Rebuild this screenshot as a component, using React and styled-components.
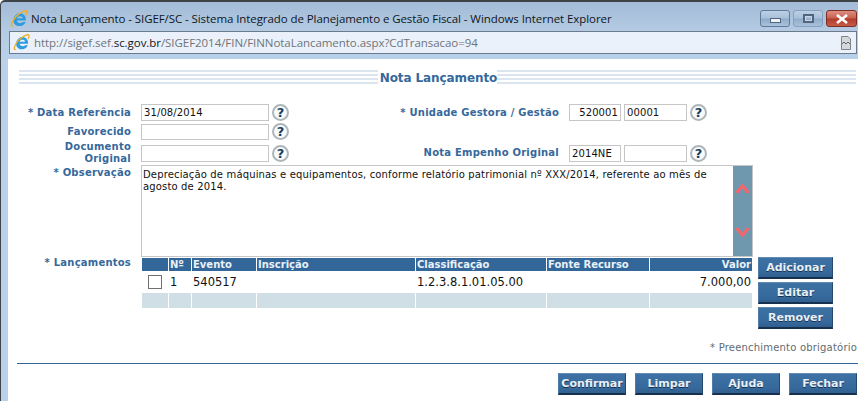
import styled, { createGlobalStyle } from 'styled-components'

const GlobalStyle = createGlobalStyle`
  html, body {
    margin: 0;
    padding: 0;
    background: #ffffff;
  }
  * {
    box-sizing: border-box;
  }
`

const columns = [
  { key: 'check', label: '', width: 27 },
  { key: 'numero', label: 'Nº', width: 23 },
  { key: 'evento', label: 'Evento', width: 65 },
  { key: 'inscricao', label: 'Inscrição', width: 159 },
  { key: 'classificacao', label: 'Classificação', width: 131 },
  { key: 'fonte', label: 'Fonte Recurso', width: 103 },
  { key: 'valor', label: 'Valor', width: 102, right: true },
]

function IeIcon({ size = 18 }) {
  return (
    <svg width={size} height={size} viewBox="0 0 18 18">
      <path d="M9.800 3.200C13.500 3.200 16.300 6.100 15.900 10.400H7C7.200 13 11 13.900 13 11.900H15.700C14.300 16.200 8.300 17.400 5 14.500C2.300 11.800 3 6.700 6.300 4.500C7.300 3.700 8.500 3.200 9.800 3.200ZM7.100 8.200H12.800C12.600 5.500 7.500 5.400 7.100 8.200Z" fill="#2f9ce0" fillRule="evenodd" />
      <path d="M2.800 15.800C.500 17.800 .500 13 5.500 7C10 2 16.300-.5 17 1.500C17.400 2.700 16.600 4 15.600 5.300" fill="none" stroke="#efb02e" strokeWidth="1.400" />
    </svg>
  )
}

function PageIcon() {
  return (
    <svg width="10" height="14" viewBox="0 0 10 14">
      <path d="M.5.500H7L9.500 3V13.500H.5Z" fill="#d4d8dc" stroke="#7d8487" />
      <path d="M1 8L3 6L5 8L7 6L9 8" fill="none" stroke="#666" />
    </svg>
  )
}

function Chevron({ down }) {
  return (
    <svg width="13" height="11" viewBox="0 0 13 11">
      <path d={down ? 'M.5 2L6.500 9L12.500 2' : 'M.5 9L6.500 2L12.500 9'} fill="none" stroke="#f0686e" strokeWidth="3.400" />
    </svg>
  )
}

function HelpField({ children }) {
  return (
    <InputGroup>
      {children}
      <HelpButton>?</HelpButton>
    </InputGroup>
  )
}

export default function App() {
  return (
    <Window>
      <GlobalStyle />
      <TitleBar>
        <IeIcon />
        <TitleText>Nota Lançamento - SIGEF/SC - Sistema Integrado de Planejamento e Gestão Fiscal - Windows Internet Explorer</TitleText>
        <WindowControls>
          <WindowButton>
            <MinimizeGlyph />
          </WindowButton>
          <WindowButton $faded>
            <RestoreGlyph />
          </WindowButton>
          <CloseButton>
            <svg width="14" height="10" viewBox="0 0 14 10">
              <path d="M2 1L12 9M12 1L2 9" stroke="#ffffff" strokeWidth="2.600" />
            </svg>
          </CloseButton>
        </WindowControls>
      </TitleBar>

      <AddressBar>
        <IeIcon size={17} />
        <AddressText>
          http://sigef.sef.<b>sc.gov.br</b>/SIGEF2014/FIN/FINNotaLancamento.aspx?CdTransacao=94
        </AddressText>
        <PageIcon />
      </AddressBar>

      <Page>
        <Banner>
          <h1>Nota Lançamento</h1>
        </Banner>

        <FieldRow $height={17} $top={19}>
          <FieldLabel>* Data Referência</FieldLabel>
          <HelpField>
            <TextInput $width={129} $tall>31/08/2014</TextInput>
          </HelpField>
          <FieldLabel>* Unidade Gestora / Gestão</FieldLabel>
          <HelpField>
            <TextInput $width={52} $tall $right>520001</TextInput>
            <TextInput $width={63} $tall>00001</TextInput>
          </HelpField>
        </FieldRow>

        <FieldRow $height={16} $top={2}>
          <FieldLabel>Favorecido</FieldLabel>
          <HelpField>
            <TextInput $width={129} />
          </HelpField>
        </FieldRow>

        <FieldRow $height={24} $top={2}>
          <FieldLabel>Documento Original</FieldLabel>
          <HelpField>
            <TextInput $width={129} $tall />
          </HelpField>
          <FieldLabel>Nota Empenho Original</FieldLabel>
          <HelpField>
            <TextInput $width={52} $tall>2014NE</TextInput>
            <TextInput $width={63} $tall />
          </HelpField>
        </FieldRow>

        <ObservationRow>
          <FieldLabel $top>* Observação</FieldLabel>
          <ObservationBox>
            <ObservationText>
              Depreciação de máquinas e equipamentos, conforme relatório patrimonial nº XXX/2014, referente ao mês de agosto de 2014.
            </ObservationText>
            <ScrollRail>
              <Chevron />
              <Chevron down />
            </ScrollRail>
          </ObservationBox>
        </ObservationRow>

        <EntriesRow>
          <EntriesLabel>* Lançamentos</EntriesLabel>
          <EntriesTable>
            <colgroup>
              {columns.map((col) => (
                <col key={col.key} width={col.width} />
              ))}
            </colgroup>
            <thead>
              <tr>
                {columns.map((col) => (
                  <HeadCell key={col.key} $right={col.right}>{col.label}</HeadCell>
                ))}
              </tr>
            </thead>
            <tbody>
              <tr>
                <BodyCell>
                  <CheckBox />
                </BodyCell>
                <BodyCell>1</BodyCell>
                <BodyCell>540517</BodyCell>
                <BodyCell />
                <BodyCell>1.2.3.8.1.01.05.00</BodyCell>
                <BodyCell />
                <BodyCell $right>7.000,00</BodyCell>
              </tr>
              <tr>
                {columns.map((col) => (
                  <FootCell key={col.key} />
                ))}
              </tr>
            </tbody>
          </EntriesTable>
          <SideActions>
            <ActionButton $width={75}>Adicionar</ActionButton>
            <ActionButton $width={75}>Editar</ActionButton>
            <ActionButton $width={75}>Remover</ActionButton>
          </SideActions>
        </EntriesRow>

        <RequiredHint>* Preenchimento obrigatório</RequiredHint>
        <Divider />

        <FooterActions>
          <ActionButton $width={68}>Confirmar</ActionButton>
          <ActionButton $width={68}>Limpar</ActionButton>
          <ActionButton $width={68}>Ajuda</ActionButton>
          <ActionButton $width={68}>Fechar</ActionButton>
        </FooterActions>
      </Page>
    </Window>
  )
}

const Window = styled.div`
  width: 858px;
  height: 401px;
  overflow: hidden;
  display: flex;
  flex-direction: column;
  padding-left: 2px;
  background: linear-gradient(180deg, #a3bbd6 0, #b4cbe3 30px, #b9d1ea 60px);
  border-top: 2px solid #3e4347;
  border-left: 1px solid #3e4347;
  border-top-left-radius: 5px;
`

const TitleBar = styled.header`
  height: 29px;
  display: flex;
  align-items: center;
  padding: 4px 1px 0 7px;
  gap: 3px;
`

const TitleText = styled.span`
  flex: 1;
  color: #10161c;
  font-family: 'Open Sans', 'Liberation Sans', sans-serif;
  font-size: 11.500px;
  letter-spacing: -0.08px;
  white-space: nowrap;
`

const WindowControls = styled.div`
  display: flex;
  gap: 3px;
`

const WindowButton = styled.span`
  width: 30px;
  height: 17px;
  display: flex;
  align-items: center;
  justify-content: center;
  border: 1px solid ${({ $faded }) => ($faded ? '#86a0bd' : '#5f7a98')};
  border-radius: 3px;
  background: linear-gradient(180deg, #bcd0e5 0, #a8c0da 48%, #8fabc9 52%, #a9c2dc 100%);
`

const CloseButton = styled(WindowButton)`
  width: 31px;
  border-color: #7c2d24;
  background: linear-gradient(180deg, #dc8f83 0, #c9604f 48%, #b23a2a 52%, #c65c48 100%);
`

const MinimizeGlyph = styled.span`
  width: 11px;
  height: 5px;
  margin-top: 4px;
  background: #eef3f8;
  border: 1px solid #51667d;
`

const RestoreGlyph = styled.span`
  width: 11px;
  height: 9px;
  border: 2px solid #51667d;
  outline: 1px solid #c6d6e6;
  outline-offset: -3px;
`

const AddressBar = styled.div`
  height: 23px;
  display: flex;
  align-items: center;
  gap: 4px;
  margin: 0 1px 0 6px;
  padding: 0 5px 0 3px;
  background: #eaf1fa;
  border: 1px solid #6b7b8c;
`

const AddressText = styled.span`
  flex: 1;
  color: #6f7478;
  font-family: 'Open Sans', 'Liberation Sans', sans-serif;
  font-size: 11.500px;
  letter-spacing: -0.05px;
  white-space: nowrap;

  b {
    color: #14181c;
    font-weight: 400;
  }
`

const Page = styled.main`
  flex: 1;
  margin: 5px 0 0 5px;
  padding-top: 11px;
  background: #ffffff;
  font-family: 'DejaVu Sans', Verdana, sans-serif;
`

const Banner = styled.div`
  height: 15px;
  margin: 0 2px 0 11px;
  display: flex;
  justify-content: center;
  background: repeating-linear-gradient(180deg, #dbe5f0 0, #dbe5f0 2px, #ffffff 2px, #ffffff 4px);

  h1 {
    margin: 0;
    padding: 1px 0 0 2px;
    color: #36689b;
    background: #ffffff;
    font-size: 12px;
    font-weight: 700;
    line-height: 14px;
    letter-spacing: -0.1px;
  }
`

const FieldRow = styled.div`
  height: ${({ $height }) => $height}px;
  margin-top: ${({ $top }) => $top}px;
  padding-left: 11px;
  display: grid;
  grid-template-columns: 112px 148px 260px auto;
  column-gap: 10px;
  justify-content: start;
  align-items: center;
`

const FieldLabel = styled.label`
  align-self: ${({ $top }) => ($top ? 'start' : 'center')};
  margin-top: ${({ $top }) => ($top ? 2 : 0)}px;
  color: #36689b;
  font-size: 10px;
  font-weight: 700;
  line-height: 12px;
  letter-spacing: 0.22px;
  text-align: right;
`

const EntriesLabel = styled(FieldLabel)`
  width: 112px;
  flex: none;
  align-self: flex-start;
`

const InputGroup = styled.div`
  display: flex;
  align-items: center;
  gap: 3px;
`

const TextInput = styled.div`
  width: ${({ $width }) => $width}px;
  height: ${({ $tall }) => ($tall ? 17 : 16)}px;
  padding: 0 2px;
  background: #ffffff;
  border: 1px solid #c6c6c6;
  color: #111111;
  font-size: 10px;
  line-height: 15px;
  letter-spacing: 0.1px;
  text-align: ${({ $right }) => ($right ? 'right' : 'left')};
`

const HelpButton = styled.span`
  width: 17px;
  height: 17px;
  flex: none;
  border: 2px solid #aeb6ba;
  border-radius: 50%;
  background: #f8fafb;
  color: #123f62;
  font-size: 13px;
  font-weight: 700;
  line-height: 13px;
  text-align: center;
`

const ObservationRow = styled.div`
  height: 92px;
  padding-left: 11px;
  display: grid;
  grid-template-columns: 112px 612px;
  column-gap: 10px;
`

const ObservationBox = styled.div`
  display: flex;
  border: 1px solid #c6c6c6;
`

const ObservationText = styled.p`
  flex: 1;
  margin: 0;
  padding: 3px 20px 0 1px;
  color: #111111;
  font-size: 10px;
  line-height: 12px;
  letter-spacing: 0.15px;
`

const ScrollRail = styled.div`
  width: 19px;
  display: flex;
  flex-direction: column;
  align-items: center;
  gap: 31px;
  padding-top: 18px;
  background: #6f97ae;
`

const EntriesRow = styled.div`
  padding-left: 11px;
  display: flex;
  align-items: flex-start;
`

const EntriesTable = styled.table`
  width: 610px;
  flex: none;
  margin: 1px 6px 0 11px;
  table-layout: fixed;
  border-collapse: separate;
  border-spacing: 0;
  font-family: 'DejaVu Sans', Verdana, sans-serif;
`

const HeadCell = styled.th`
  height: 13px;
  padding: 0 1px;
  background: #336699;
  border-right: 1px solid #ffffff;
  color: #eaf1f7;
  font-size: 10px;
  font-weight: 700;
  line-height: 12px;
  text-align: ${({ $right }) => ($right ? 'right' : 'left')};

  &:last-child {
    border-right: 0;
  }
`

const BodyCell = styled.td`
  height: 22px;
  padding: 0 1px;
  color: #111111;
  font-size: 11.500px;
  text-align: ${({ $right }) => ($right ? 'right' : 'left')};
`

const FootCell = styled.td`
  height: 15px;
  padding: 0;
  background: #d0dfe6;
  border-right: 1px solid #ffffff;

  &:last-child {
    border-right: 0;
  }
`

const CheckBox = styled.span`
  display: block;
  width: 14px;
  height: 14px;
  margin-left: 5px;
  background: #ffffff;
  border: 1px solid #707070;
`

const SideActions = styled.div`
  display: flex;
  flex-direction: column;
  gap: 3px;
`

const ActionButton = styled.button`
  width: ${({ $width }) => $width}px;
  height: 22px;
  padding: 0;
  background: linear-gradient(180deg, #3f72a4 0, #376a9c 70%, #2f5f8f 100%);
  border: 0;
  border-top: 1px solid #5f8bb5;
  border-right: 1px solid #27496d;
  border-bottom: 2px solid #16304d;
  border-left: 1px solid #4f7ca8;
  color: #e8f0f7;
  font-family: 'DejaVu Sans', Verdana, sans-serif;
  font-size: 11px;
  font-weight: 700;
  text-shadow: 0 1px 0 #17324f;
`

const RequiredHint = styled.p`
  margin: 13px 1px 0 0;
  color: #5f6b72;
  font-size: 10px;
  line-height: 12px;
  letter-spacing: 0.2px;
  text-align: right;
`

const Divider = styled.hr`
  height: 1px;
  margin: 9px 0 0 9px;
  background: #336699;
  border: 0;
`

const FooterActions = styled.div`
  display: flex;
  justify-content: flex-end;
  gap: 9px;
  margin-top: 9px;
  padding-right: 1px;
`
